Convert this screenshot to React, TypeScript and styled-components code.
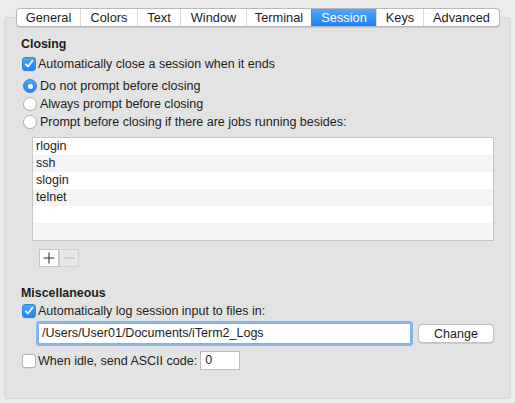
import React from "react";
import styled, { createGlobalStyle } from "styled-components";

const Global = createGlobalStyle`
  html, body { margin: 0; padding: 0; background: #ececec; }
  body { font-family: "Liberation Sans", Arial, sans-serif; font-size: 12.5px; color: #1c1c1c; }
  * { box-sizing: border-box; }
`;

const Window = styled.div`
  width: 515px;
  height: 403px;
  padding: 8px 4px 4px 4px;
  background: #ececec;
`;

const TabBar = styled.div`
  position: relative;
  z-index: 1;
  display: flex;
  margin: 0 0 -10px 12px;
  width: 484px;
  height: 19px;
  background: #fff;
  border: 1px solid #b9b9b9;
  border-radius: 4px;
  box-shadow: 0 0.5px 1px rgba(0, 0, 0, 0.12);
  overflow: hidden;
`;

const Tab = styled.div<{ $w: number; $active?: boolean }>`
  flex: 0 0 ${(p) => p.$w}px;
  display: flex;
  align-items: center;
  justify-content: center;
  font-size: 12.8px;
  line-height: 17px;
  color: ${(p) => (p.$active ? "#fff" : "#1c1c1c")};
  background: ${(p) => (p.$active ? "linear-gradient(#52a8fb, #1d82f3)" : "transparent")};
  border-left: 1px solid ${(p) => (p.$active ? "#2f8cf0" : "#dadada")};
  &:first-child { border-left: none; }
`;

const Panel = styled.div`
  height: 382px;
  background: #e3e3e3;
  border: 1px solid #d9d9d9;
  border-radius: 3px;
  padding: 17px 16px 0 16px;
  display: flex;
  flex-direction: column;
`;

const Heading = styled.div<{ $mt?: number }>`
  font-weight: bold;
  font-size: 12.4px;
  line-height: 16px;
  height: 16px;
  margin-top: ${(p) => p.$mt ?? 0}px;
  padding-top: 1px;
`;

const Row = styled.label<{ $mt?: number; $h?: number }>`
  display: flex;
  align-items: center;
  height: ${(p) => p.$h ?? 18}px;
  line-height: 16px;
  margin-top: ${(p) => p.$mt ?? 0}px;
  white-space: nowrap;
`;

const CheckBox = styled.span<{ $on?: boolean }>`
  flex: 0 0 14px;
  width: 14px;
  height: 14px;
  margin: 0 2px 0 1px;
  border-radius: 3px;
  display: flex;
  align-items: center;
  justify-content: center;
  background: ${(p) => (p.$on ? "linear-gradient(#4ea6fb, #1f83f3)" : "#fff")};
  border: 1px solid ${(p) => (p.$on ? "#2a86ee" : "#b3b3b3")};
  box-shadow: 0 0.5px 0.5px rgba(0, 0, 0, 0.1);
`;

const Radio = styled.span<{ $on?: boolean }>`
  flex: 0 0 14px;
  width: 14px;
  height: 14px;
  margin: 0 3px 0 2px;
  border-radius: 50%;
  display: flex;
  align-items: center;
  justify-content: center;
  background: ${(p) => (p.$on ? "linear-gradient(#4ea6fb, #1f83f3)" : "#fff")};
  border: 1px solid ${(p) => (p.$on ? "#2a86ee" : "#b3b3b3")};
  box-shadow: 0 0.5px 0.5px rgba(0, 0, 0, 0.1);
`;

const Dot = styled.span`
  width: 5px;
  height: 5px;
  border-radius: 50%;
  background: #fff;
`;

const List = styled.div`
  margin: 6px 0 0 11px;
  border: 1px solid #c6c6c6;
  background: #fff;
`;

const ListRow = styled.div<{ $alt?: boolean }>`
  height: 17px;
  line-height: 17px;
  padding-left: 3px;
  background: ${(p) => (p.$alt ? "#f4f4f4" : "#fff")};
`;

const ButtonPair = styled.div`
  display: flex;
  margin: 8px 0 0 18px;
  height: 18px;
`;

const SqButton = styled.div<{ $disabled?: boolean }>`
  width: 20px;
  height: 18px;
  display: flex;
  align-items: center;
  justify-content: center;
  background: ${(p) => (p.$disabled ? "#e8e8e8" : "#fff")};
  border: 1px solid ${(p) => (p.$disabled ? "#d2d2d2" : "#c4c4c4")};
  & + & { border-left: 1px solid #d2d2d2; }
`;

const FieldRow = styled.div`
  display: flex;
  align-items: center;
  gap: 7px;
  margin: 3px 0 0 17px;
  height: 21px;
`;

const PathField = styled.div`
  flex: 1;
  height: 21px;
  line-height: 19px;
  padding: 0 3px;
  background: #fff;
  border: 1px solid #7fb4e8;
  box-shadow: 0 0 0 2px #84b9ee;
  border-radius: 1px;
`;

const Button = styled.div`
  flex: 0 0 76px;
  height: 19px;
  display: flex;
  align-items: center;
  justify-content: center;
  background: #fff;
  border: 1px solid #c2c2c2;
  border-radius: 4px;
  box-shadow: 0 0.5px 1px rgba(0, 0, 0, 0.12);
`;

const SmallField = styled.div`
  width: 40px;
  height: 19px;
  line-height: 17px;
  padding: 0 4px;
  margin-left: 3px;
  background: #fff;
  border: 1px solid #bcbcbc;
`;

const Check = () => (
  <svg width="10" height="10" viewBox="0 0 10 10">
    <path d="M1.8 5.3 L4 7.6 L8.4 1.8" fill="none" stroke="#fff" strokeWidth="1.7" strokeLinecap="round" strokeLinejoin="round" />
  </svg>
);

const tabs: [string, number][] = [
  ["General", 63],
  ["Colors", 57],
  ["Text", 43],
  ["Window", 66],
  ["Terminal", 65],
  ["Session", 65],
  ["Keys", 47],
  ["Advanced", 76],
];

const items = ["rlogin", "ssh", "slogin", "telnet", "", ""];

export default function App() {
  return (
    <>
      <Global />
      <Window>
        <TabBar>
          {tabs.map(([t, w]) => (
            <Tab key={t} $w={w} $active={t === "Session"}>
              {t}
            </Tab>
          ))}
        </TabBar>
        <Panel>
          <Heading>Closing</Heading>
          <Row $mt={4}>
            <CheckBox $on>
              <Check />
            </CheckBox>
            Automatically close a session when it ends
          </Row>
          <Row $mt={4}>
            <Radio $on>
              <Dot />
            </Radio>
            Do not prompt before closing
          </Row>
          <Row>
            <Radio />
            Always prompt before closing
          </Row>
          <Row>
            <Radio />
            Prompt before closing if there are jobs running besides:
          </Row>
          <List>
            {items.map((it, i) => (
              <ListRow key={i} $alt={i % 2 === 1}>
                {it}
              </ListRow>
            ))}
          </List>
          <ButtonPair>
            <SqButton>
              <svg width="12" height="12" viewBox="0 0 12 12">
                <path d="M6 0.5 V11.5 M0.5 6 H11.5" stroke="#333" strokeWidth="1.1" />
              </svg>
            </SqButton>
            <SqButton $disabled>
              <svg width="12" height="12" viewBox="0 0 12 12">
                <path d="M0.5 6 H11.5" stroke="#bdbdbd" strokeWidth="1.1" />
              </svg>
            </SqButton>
          </ButtonPair>
          <Heading $mt={17}>Miscellaneous</Heading>
          <Row $mt={2}>
            <CheckBox $on>
              <Check />
            </CheckBox>
            Automatically log session input to files in:
          </Row>
          <FieldRow>
            <PathField>/Users/User01/Documents/iTerm2_Logs</PathField>
            <Button>Change</Button>
          </FieldRow>
          <Row $mt={7} $h={19}>
            <CheckBox />
            When idle, send ASCII code:
            <SmallField>0</SmallField>
          </Row>
        </Panel>
      </Window>
    </>
  );
}
